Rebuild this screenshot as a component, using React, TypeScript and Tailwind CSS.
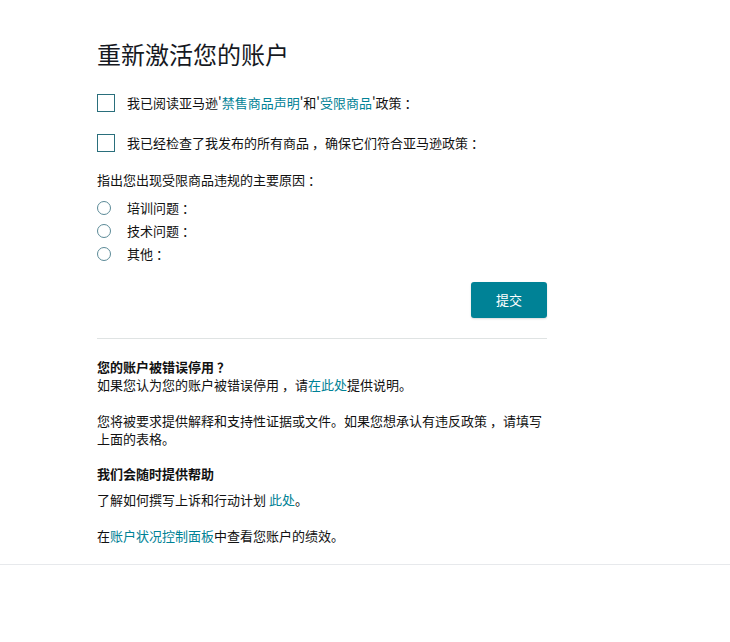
import React from "react";

const font = { fontFamily: '"Noto Sans CJK SC", "Noto Sans", sans-serif' };

function P({ c }: { c: string }) {
  return <span className="pl-[3px]">{c}</span>;
}

function Checkbox() {
  return <span className="inline-block w-[18px] h-[18px] border-[1.5px] border-[#2a6f7c] bg-white shrink-0" />;
}

function Radio() {
  return <span className="inline-block w-[14px] h-[14px] rounded-full border border-[#5b8a97] bg-white shrink-0" />;
}

export default function App() {
  return (
    <div lang="zh-CN" className="w-[730px] h-[642px] bg-white text-[#111111]" style={font}>
      <div className="pl-[97px] w-[547px] pt-[36px]">
        <h1 className="text-[24px] leading-[36px] text-[#16191f] font-normal">重新激活您的账户</h1>
        <div className="mt-[22px] flex flex-col gap-[22px] text-[13px]">
          <label className="flex items-center h-[18px] gap-[12px]">
            <Checkbox />
            <span className="whitespace-nowrap">
              我已阅读亚马逊'<span className="text-[#008296]">禁售商品声明</span>'和'<span className="text-[#008296]">受限商品</span>'政策<P c="：" />
            </span>
          </label>
          <label className="flex items-center h-[18px] gap-[12px]">
            <Checkbox />
            <span className="whitespace-nowrap">我已经检查了我发布的所有商品<P c="，" />确保它们符合亚马逊政策<P c="：" /></span>
          </label>
        </div>
        <div className="mt-[18px] text-[13px] leading-[20px] whitespace-nowrap">指出您出现受限商品违规的主要原因<P c="：" /></div>
        <div className="mt-[6px] flex flex-col text-[13px]">
          {["培训问题", "技术问题", "其他"].map((t) => (
            <label key={t} className="flex items-center h-[23px] gap-[16px]">
              <Radio />
              <span className="whitespace-nowrap">{t}<P c="：" /></span>
            </label>
          ))}
        </div>
        <div className="mt-[17px] flex justify-end">
          <button className="w-[76px] h-[36px] rounded-[3px] bg-[#008296] text-white text-[13px] shadow-[0_1px_2px_rgba(0,0,0,0.15)]">提交</button>
        </div>
        <div className="mt-[20px] border-t border-[#dfe3e3]" />
        <div className="mt-[19px] text-[13px] leading-[18px]">
          <div className="font-bold whitespace-nowrap">您的账户被错误停用<P c="？" /></div>
          <div>
            如果您认为您的账户被错误停用<P c="，" />请<span className="text-[#008296]">在此处</span>提供说明。
          </div>
          <div className="mt-[18px]">
            <span>您将被要求提供解释和支持性证据或文件。如果您想承认有违反政策<P c="，" />请填写</span>
            <br />
            <span>上面的表格。</span>
          </div>
          <div className="mt-[17px] font-bold">我们会随时提供帮助</div>
          <div className="mt-[8px]">
            了解如何撰写上诉和行动计划 <span className="text-[#008296]">此处</span>。
          </div>
          <div className="mt-[18px]">
            在<span className="text-[#008296]">账户状况控制面板</span>中查看您账户的绩效。
          </div>
        </div>
      </div>
      <div className="mt-[19px] border-t border-[#e7e9ec]" />
    </div>
  );
}
